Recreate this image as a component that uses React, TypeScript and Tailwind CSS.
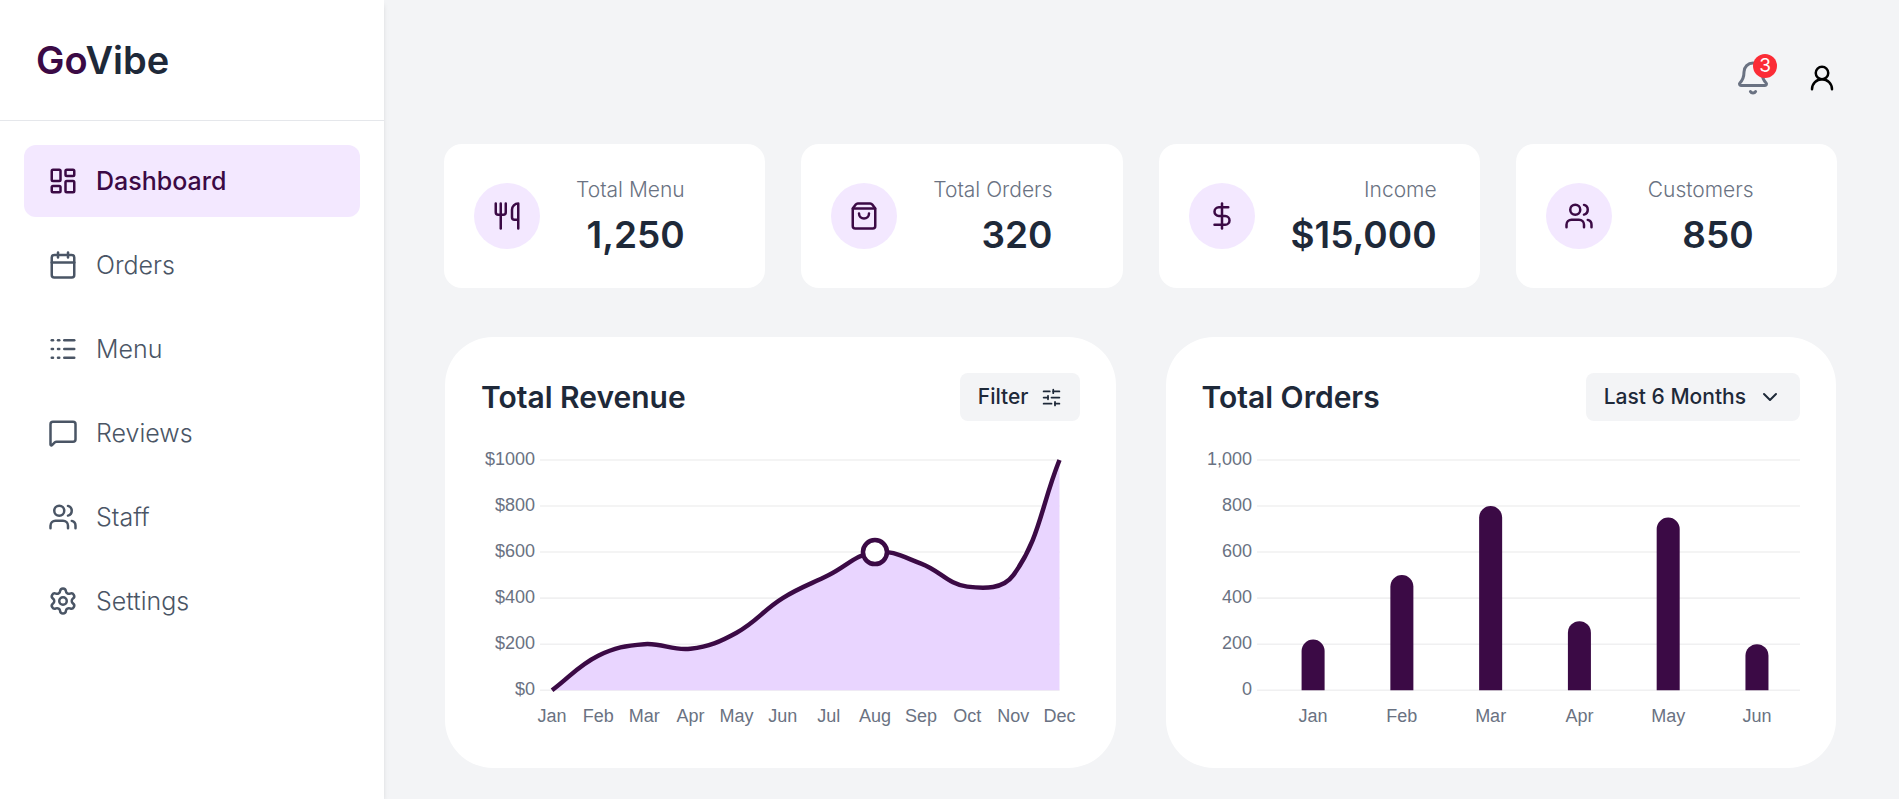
import {
  Bell, Calendar, ChevronDown, DollarSign, LayoutDashboard, Logs, MessageSquare,
  Settings, ShoppingBag, SlidersHorizontal, UserRound, Users, Utensils,
} from "lucide-react";
import type { LucideIcon } from "lucide-react";

const nav: { label: string; icon: LucideIcon; active?: boolean }[] = [
  { label: "Dashboard", icon: LayoutDashboard, active: true },
  { label: "Orders", icon: Calendar },
  { label: "Menu", icon: Logs },
  { label: "Reviews", icon: MessageSquare },
  { label: "Staff", icon: Users },
  { label: "Settings", icon: Settings },
];

const stats: { label: string; value: string; icon: LucideIcon }[] = [
  { label: "Total Menu", value: "1,250", icon: Utensils },
  { label: "Total Orders", value: "320", icon: ShoppingBag },
  { label: "Income", value: "$15,000", icon: DollarSign },
  { label: "Customers", value: "850", icon: Users },
];

const months = ["Jan", "Feb", "Mar", "Apr", "May", "Jun", "Jul", "Aug", "Sep", "Oct", "Nov", "Dec"];
const revenue = [0, 150, 200, 180, 250, 400, 500, 600, 550, 450, 500, 1000];
const orders = [220, 500, 800, 300, 750, 200];
const ticks = [1000, 800, 600, 400, 200, 0];

const TOP = 15;
const PLOT = 230;
const yOf = (v: number) => TOP + PLOT - (v / 1000) * PLOT;

type Point = { x: number; y: number };

/** Cubic spline whose control points scale with the distance to each neighbour. */
function spline(points: Point[], tension = 0.4) {
  const dist = (a: Point, b: Point) => Math.hypot(b.x - a.x, b.y - a.y);
  const clamp = (v: number) => Math.min(TOP + PLOT, Math.max(TOP, v));
  const handles = points.map((p, i) => {
    const prev = points[i - 1] ?? p;
    const next = points[i + 1] ?? p;
    const d1 = dist(prev, p);
    const d2 = dist(p, next);
    const a = (tension * d1) / (d1 + d2);
    const b = (tension * d2) / (d1 + d2);
    return {
      inX: p.x - a * (next.x - prev.x),
      inY: clamp(p.y - a * (next.y - prev.y)),
      outX: p.x + b * (next.x - prev.x),
      outY: clamp(p.y + b * (next.y - prev.y)),
    };
  });
  return points
    .map((p, i) =>
      i === 0
        ? `M${p.x} ${p.y}`
        : `C${handles[i - 1].outX} ${handles[i - 1].outY} ${handles[i].inX} ${handles[i].inY} ${p.x} ${p.y}`,
    )
    .join(" ");
}

function Grid({ left, right, format }: { left: number; right: number; format: (v: number) => string }) {
  return (
    <g>
      {ticks.map((t) => (
        <g key={t}>
          <line x1={left} x2={right} y1={yOf(t)} y2={yOf(t)} stroke="#f0f0f1" strokeWidth={1.5} />
          <text x={left - 5} y={yOf(t) + 5} textAnchor="end">{format(t)}</text>
        </g>
      ))}
    </g>
  );
}

const chartClass = "block w-full fill-gray-500 font-['Liberation_Sans',Arial,sans-serif] text-[18px]";

function RevenueChart() {
  const points = revenue.map((v, i) => ({ x: 71 + (i * 507) / 11, y: yOf(v) }));
  const line = spline(points);
  const peak = points[7];
  return (
    <svg viewBox="0 0 598 287" className={chartClass} role="img" aria-label="Total revenue by month">
      <Grid left={59} right={578} format={(v) => `$${v}`} />
      <path d={`${line} L578 ${yOf(0)} L71 ${yOf(0)} Z`} fill="#e9d5ff" />
      <path d={line} fill="none" stroke="#3b0a45" strokeWidth={4.5} />
      <circle cx={peak.x} cy={peak.y} r={12} fill="#fff" stroke="#3b0a45" strokeWidth={4.5} />
      {months.map((m, i) => (
        <text key={m} x={points[i].x} y={277} textAnchor="middle">{m}</text>
      ))}
    </svg>
  );
}

function OrdersChart() {
  return (
    <svg viewBox="0 0 598 287" className={chartClass} role="img" aria-label="Total orders by month">
      <Grid left={55} right={598} format={(v) => v.toLocaleString("en-US")} />
      {orders.map((v, i) => {
        const x = 111 + i * 88.7;
        const y = yOf(v);
        return (
          <g key={months[i]}>
            <path
              d={`M${x - 11.5} ${yOf(0)} V${y + 11.5} A11.5 11.5 0 0 1 ${x + 11.5} ${y + 11.5} V${yOf(0)} Z`}
              fill="#3b0a45"
            />
            <text x={x} y={277} textAnchor="middle">{months[i]}</text>
          </g>
        );
      })}
    </svg>
  );
}

export default function App() {
  return (
    <div className="flex min-h-screen bg-gray-100 font-['Inter','Open_Sans',sans-serif]">
      <aside className="z-10 w-96 shrink-0 bg-white shadow-md">
        <div className="flex h-[121px] items-center border-b border-gray-200 px-9">
          <span className="text-[38px] leading-[48px] font-semibold text-gray-800">
            <span className="text-[#3b0a45]">Go</span>Vibe
          </span>
        </div>
        <nav className="flex flex-col gap-3 p-6">
          {nav.map(({ label, icon: Icon, active }) => (
            <a
              key={label}
              href="#"
              className={
                active
                  ? "flex h-[72px] items-center gap-[18px] rounded-xl bg-purple-100 px-6 text-[25px] font-medium text-[#3b0a45]"
                  : "flex h-[72px] items-center gap-[18px] rounded-xl px-6 text-[25px] font-light text-gray-600"
              }
            >
              <Icon size={30} />
              <span className="pt-0.5">{label}</span>
            </a>
          ))}
        </nav>
      </aside>

      <main className="min-w-0 flex-1 pr-[62px] pb-7 pl-[60px]">
        <header className="flex h-36 items-center justify-end gap-9 pt-3">
          <button aria-label="Notifications" className="relative text-gray-500">
            <Bell size={36} />
            <span className="absolute -top-1.5 -right-1.5 flex size-6 items-center justify-center rounded-full bg-red-500 text-[19px] leading-6 text-white">
              3
            </span>
          </button>
          <button aria-label="Profile" className="text-black">
            <UserRound size={30} />
          </button>
        </header>

        <section className="grid grid-cols-4 gap-9">
          {stats.map(({ label, value, icon: Icon }) => (
            <div key={label} className="flex h-36 items-center gap-9 rounded-[18px] bg-white px-[30px]">
              <div className="flex size-[66px] shrink-0 items-center justify-center rounded-full bg-purple-100 text-[#3b0a45]">
                <Icon size={30} />
              </div>
              <div className="pt-0.5 text-right">
                <p className="text-[21px] leading-[36px] font-light whitespace-nowrap text-gray-500">{label}</p>
                <p className="text-[37px] leading-[54px] font-semibold text-gray-800">{value}</p>
              </div>
            </div>
          ))}
        </section>

        <section className="mt-[49px] grid grid-cols-2 gap-[50px] px-px">
          <article className="rounded-[48px] bg-white p-9">
            <div className="mb-6 flex h-12 items-center justify-between">
              <h2 className="text-[30px] font-semibold text-gray-800">Total Revenue</h2>
              <button className="flex h-12 items-center gap-3 rounded-lg bg-gray-100 px-[18px] text-[21px] font-medium text-gray-800">
                Filter
                <SlidersHorizontal size={21} />
              </button>
            </div>
            <RevenueChart />
          </article>
          <article className="rounded-[48px] bg-white p-9">
            <div className="mb-6 flex h-12 items-center justify-between">
              <h2 className="text-[30px] font-semibold text-gray-800">Total Orders</h2>
              <button className="flex h-12 items-center gap-3 rounded-lg bg-gray-100 px-[18px] text-[21px] font-medium text-gray-800">
                Last 6 Months
                <ChevronDown size={24} />
              </button>
            </div>
            <OrdersChart />
          </article>
        </section>
      </main>
    </div>
  );
}
